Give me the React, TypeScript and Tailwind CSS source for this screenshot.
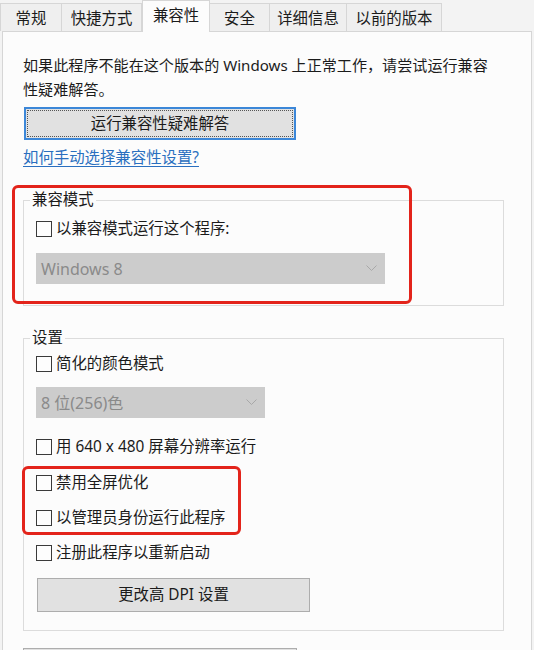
import React from "react";

const Tab = ({ label, w, active }: { label: string; w: number; active?: boolean }) => {
  if (active) {
    return (
      <div
        className="relative z-10 h-[32px] -mb-px flex items-center justify-center border border-b-0 border-[#d6d6d6] bg-[#fcfcfc] text-[15.4px] leading-[20px] text-[#1b1b1b] shrink-0"
        style={{ width: w }}
      >
        <span className="-mt-[2px]">{label}</span>
      </div>
    );
  }
  return (
    <div
      className="h-[28px] flex items-center justify-center border-t border-r border-[#d6d6d6] bg-[#efefef] text-[15.4px] leading-[20px] text-[#1b1b1b] shrink-0"
      style={{ width: w }}
    >
      <span className="mt-[3px]">{label}</span>
    </div>
  );
};

const Check = ({ label, className = "" }: { label: string; className?: string }) => (
  <div className={`flex items-center h-[24px] ml-[12px] ${className}`}>
    <span className="w-[16px] h-[16px] border border-[#3a3a3a] bg-[#fdfdfd] shrink-0" />
    <span className="ml-[4px] text-[15.4px] leading-[24px] text-[#1b1b1b] whitespace-nowrap">{label}</span>
  </div>
);

const Chevron = () => (
  <svg width="11" height="7" viewBox="0 0 11 7" className="shrink-0">
    <polyline points="0.5,0.5 5.5,5.5 10.5,0.5" fill="none" stroke="#a8a8a8" strokeWidth="1" />
  </svg>
);

const Select = ({ value, w, className = "" }: { value: string; w: number; className?: string }) => (
  <div
    className={`ml-[12px] h-[31px] bg-[#cccccc] flex items-center justify-between pl-[5px] pr-[8px] ${className}`}
    style={{ width: w }}
  >
    <span className="text-[16px] leading-[20px] text-[#8a8a8a] whitespace-nowrap">{value}</span>
    <Chevron />
  </div>
);

export default function App() {
  return (
    <div className="relative w-[534px] h-[650px] overflow-hidden bg-[#f3f3f3] [font-family:'Noto_Sans','Noto_Sans_CJK_SC',sans-serif]">
      {/* tabs */}
      <div className="flex items-end h-[31px]">
        <div className="h-[28px] w-px bg-[#d6d6d6]" />
        <Tab label="常规" w={61} />
        <Tab label="快捷方式" w={80} />
        <Tab label="兼容性" w={68} active />
        <Tab label="安全" w={60} />
        <Tab label="详细信息" w={77} />
        <Tab label="以前的版本" w={95} />
      </div>

      {/* panel */}
      <div className="ml-[2px] w-[530px] h-[640px] border border-[#d6d6d6] bg-[#fcfcfc] px-[20px] text-[#1b1b1b]">
        <p className="mt-[21px] text-[15.1px] leading-[24px] whitespace-nowrap">
          如果此程序不能在这个版本的 Windows 上正常工作，请尝试运行兼容
          <br />
          性疑难解答。
        </p>

        <button className="mt-[6px] ml-[1px] w-[272px] h-[33px] border-2 border-[#3c87d8] bg-[#e1e1e1] p-[1px] block">
          <div className="w-full h-full border border-dotted border-[#555] flex items-center justify-center text-[15.4px] leading-[20px] text-[#1b1b1b]">
            运行兼容性疑难解答
          </div>
        </button>

        <div className="mt-[6px] text-[15.4px] leading-[24px] text-[#2a6fbf] underline underline-offset-[3px]">
          如何手动选择兼容性设置?
        </div>

        <fieldset className="mt-[20px] w-[481px] border border-[#dcdcdc] pb-[21px]">
          <legend className="ml-[6px] px-[2px] text-[15.4px] leading-[20px]">兼容模式</legend>
          <Check label="以兼容模式运行这个程序:" className="mt-[7px]" />
          <Select value="Windows 8" w={349} className="mt-[12px]" />
        </fieldset>

        <fieldset className="mt-[22px] w-[481px] border border-[#dcdcdc] pb-[18px]">
          <legend className="ml-[6px] px-[2px] text-[15.4px] leading-[20px]">设置</legend>
          <Check label="简化的颜色模式" className="mt-[4px]" />
          <Select value="8 位(256)色" w={229} className="mt-[11px]" />
          <Check label="用 640 x 480 屏幕分辨率运行" className="mt-[17px]" />
          <Check label="禁用全屏优化" className="mt-[12px]" />
          <Check label="以管理员身份运行此程序" className="mt-[11px]" />
          <Check label="注册此程序以重新启动" className="mt-[11px]" />
          <button className="block mt-[13px] ml-[13px] w-[273px] h-[34px] border border-[#adadad] bg-[#e1e1e1] text-[15.4px] leading-[20px] text-[#1b1b1b]">
            更改高 DPI 设置
          </button>
        </fieldset>

        <div className="mt-[17px] w-[274px] h-[34px] border border-[#adadad] bg-[#e1e1e1]" />
      </div>

      {/* red highlight boxes */}
      <div className="absolute left-[12px] top-[185px] w-[400px] h-[119px] border-[3px] border-[#e3241b] rounded-[6px]" />
      <div className="absolute left-[22px] top-[466px] w-[219px] h-[69px] border-[3px] border-[#e3241b] rounded-[6px]" />
    </div>
  );
}
